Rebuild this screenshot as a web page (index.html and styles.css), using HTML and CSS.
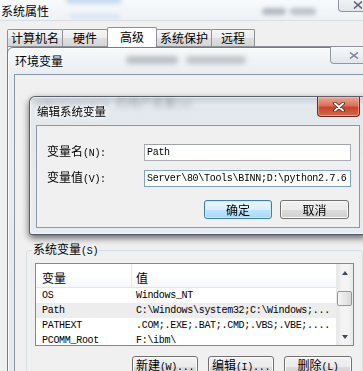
FILE: index.html
```html
<!DOCTYPE html>
<html lang="zh-CN">
<head>
<meta charset="utf-8">
<title>编辑系统变量</title>
<link rel="stylesheet" href="styles.css">
</head>
<body>
<div class="sp-titlebar">
  <span class="blur blob-blue1"></span>
  <span class="blur blob-blue2"></span>
  <span class="blur blob-gray1"></span>
  <span class="blur blob-gray2"></span>
  <span class="sp-title">系统属性</span>
  <span class="capbtn outer-close"><svg width="10" height="8" viewBox="0 0 10 8"><path d="M1 0.5 L9 7.5 M9 0.5 L1 7.5" stroke="#5c6670" stroke-width="1.6" fill="none"/></svg></span>
</div>
<div class="tabs">
  <div class="tab t1">计算机名</div>
  <div class="tab t2">硬件</div>
  <div class="tab t3 active">高级</div>
  <div class="tab t4">系统保护</div>
  <div class="tab t5">远程</div>
</div>
<div class="tab-panel"></div>

<section class="envwin">
  <span class="blur blob-gray3"></span>
  <span class="blur blob-gray4"></span>
  <div class="env-title">环境变量</div>
  <span class="capbtn env-close"><svg width="10" height="7" viewBox="0 0 10 7"><path d="M1 0.5 L9 6.5 M9 0.5 L1 6.5" stroke="#7a848e" stroke-width="1.5" fill="none"/></svg></span>
  <div class="env-client">
    <div class="usergroup"><span class="mono">Administrator </span>的用户变量<span class="mono">(U)</span></div>
    <fieldset class="sysgroup">
      <legend>系统变量<span class="mono">(S)</span></legend>
      <div class="listview">
        <div class="lv-main">
          <div class="lv-head"><div class="c1">变量</div><div class="c2">值</div></div>
          <div class="lv-row mono"><div class="c1">OS</div><div class="c2">Windows_NT</div></div>
          <div class="lv-row mono sel"><div class="c1">Path</div><div class="c2">C:\Windows\system32;C:\Windows;...</div></div>
          <div class="lv-row mono"><div class="c1">PATHEXT</div><div class="c2">.COM;.EXE;.BAT;.CMD;.VBS;.VBE;....</div></div>
          <div class="lv-row mono"><div class="c1">PCOMM_Root</div><div class="c2">F:\ibm\</div></div>
        </div>
        <div class="vscroll">
          <div class="sb-btn"><span class="arrow-up"></span></div>
          <div class="sb-track"><div class="thumb"></div></div>
          <div class="sb-btn"><span class="arrow-down"></span></div>
        </div>
      </div>
      <div class="grp-buttons">
        <button class="btn w66">新建<span class="mono">(W)...</span></button>
        <button class="btn w66">编辑<span class="mono">(I)...</span></button>
        <button class="btn w68">删除<span class="mono">(L)</span></button>
      </div>
    </fieldset>
  </div>
</section>

<section class="editdlg">
  <div class="dlg-title">编辑系统变量</div>
  <span class="dlg-close"><svg width="12" height="10" viewBox="0 0 12 10"><path d="M2 1.5 L10 8.5 M10 1.5 L2 8.5" stroke="#4a2018" stroke-width="3.6" stroke-linecap="round" fill="none"/><path d="M2 1.5 L10 8.5 M10 1.5 L2 8.5" stroke="#ffffff" stroke-width="2" stroke-linecap="round" fill="none"/></svg></span>
  <div class="dlg-client">
    <div class="form">
      <label class="lbl">变量名<span class="mono">(N):</span></label>
      <input class="field mono" value="Path" readonly>
      <label class="lbl">变量值<span class="mono">(V):</span></label>
      <input class="field focus mono" value="Server\80\Tools\BINN;D:\python2.7.6" readonly>
    </div>
    <div class="dlg-buttons">
      <button class="btn ok">确定</button>
      <button class="btn cancel">取消</button>
    </div>
  </div>
</section>
</body>
</html>
```
FILE: styles.css
```css
* { box-sizing: border-box; }
html, body { margin: 0; padding: 0; }
body {
  width: 363px;
  height: 371px;
  overflow: hidden;
  position: relative;
  background: #f0f0f0;
  color: #000;
  font-family: "Noto Sans CJK SC", "Noto Sans CJK TC", sans-serif;
  font-size: 12px;
  line-height: 14px;
}
.mono {
  font-family: "Liberation Mono", "DejaVu Sans Mono", monospace;
  font-size: 10px;
  letter-spacing: -0.3px;
}
.blur { position: absolute; filter: blur(2px); border-radius: 4px; }

/* outer window: 系统属性 */
.sp-titlebar {
  position: relative;
  height: 21px;
  padding: 4px 0 0 1px;
  background: linear-gradient(#f8fafc, #eef2f6);
  border-bottom: 1px solid #d9dee3;
  overflow: hidden;
}
.sp-title { position: relative; line-height: 13px; text-shadow: 0 0 4px #fff; }
.blob-blue1 { left: 66px; top: -4px; width: 56px; height: 8px; background: #c6dbf1; }
.blob-blue2 { left: 70px; top: 14px; width: 50px; height: 5px; background: #d6e5f4; }
.blob-gray1 { left: 262px; top: 8px; width: 24px; height: 7px; background: #b4bac1; }
.blob-gray2 { left: 290px; top: 8px; width: 26px; height: 7px; background: #bcc2c8; }

.capbtn {
  position: absolute;
  display: flex;
  align-items: center;
  justify-content: center;
  border: 1px solid #8d97a3;
  border-top: none;
  border-radius: 0 0 4px 4px;
  background: linear-gradient(#f6f8fa, #e2e7ec);
}
.outer-close { left: 338px; top: -6px; width: 40px; height: 18px; padding-top: 4px; }

.tabs {
  position: relative;
  z-index: 1;
  display: flex;
  align-items: flex-end;
  height: 25px;
  padding-left: 7px;
}
.tab {
  height: 17px;
  margin-right: -1px;
  border: 1px solid #8e9198;
  border-bottom: none;
  border-radius: 2px 2px 0 0;
  background: linear-gradient(#f6f6f6, #ececec 50%, #dfdfdf 50%, #d6d6d6);
  text-align: center;
  padding-top: 1px;
  line-height: 14px;
  white-space: nowrap;
}
.tab.active {
  height: 20px;
  margin-bottom: -1px;
  background: #fff;
  padding-top: 2px;
  position: relative;
  z-index: 2;
}
.t1 { width: 56px; }
.t2 { width: 46px; }
.t3 { width: 50px; }
.t4 { width: 56px; }
.t5 { width: 44px; }
.tab-panel {
  margin-left: 7px;
  height: 400px;
  border-left: 1px solid #8e9198;
  border-top: 1px solid #8e9198;
  background: #fff;
}

/* 环境变量 window */
.envwin {
  position: absolute;
  left: 7px;
  top: 47px;
  width: 372px;
  height: 340px;
  border: 1px solid #707c89;
  border-radius: 6px 6px 0 0;
  padding-left: 6px;
  background: linear-gradient(#f7f9fb, #e9eef2 26px, #e3e8ed);
  box-shadow: inset 1px 1px 0 rgba(255,255,255,0.8);
}
.blob-gray3 { left: 118px; top: 8px; width: 52px; height: 8px; background: rgba(120,126,136,0.45); filter: blur(2.5px); }
.blob-gray4 { left: 178px; top: 8px; width: 60px; height: 8px; background: rgba(120,126,136,0.4); filter: blur(2.5px); }
.env-title {
  position: relative;
  height: 26px;
  padding: 7px 0 0 1px;
  line-height: 12px;
  text-shadow: 0 0 5px #fff;
}
.env-close { left: 322px; top: -1px; width: 48px; height: 17px; }
.env-client {
  position: relative;
  height: 320px;
  border-top: 1px solid #8a97a5;
  border-left: 1px solid #8a97a5;
  background: #f0f0f0;
}
.usergroup { height: 168px; padding: 21px 0 0 21px; line-height: 12px; }

.sysgroup {
  margin: 0 0 0 11px;
  padding: 0 8px;
  width: 337px;
  height: 140px;
  min-width: 0;
  border: 1px solid #d5dfe5;
  border-radius: 3px;
}
.sysgroup legend { padding: 0 1px; margin-left: -3px; line-height: 12px; }

.listview {
  margin-top: 5px;
  height: 83px;
  display: flex;
  border: 1px solid #828790;
  background: #fff;
}
.lv-main { flex: 1; overflow: hidden; }
.lv-head {
  display: flex;
  height: 24px;
  border-bottom: 1px solid #e5e5e5;
  background: linear-gradient(#fff, #fff 50%, #f7f8fa);
  line-height: 14px;
}
.lv-head .c1 { width: 96px; padding: 7px 0 0 6px; border-right: 1px solid #e5e5e5; }
.lv-head .c2 { padding: 7px 0 0 4px; }
.lv-row { display: flex; height: 15px; line-height: 15px; white-space: nowrap; }
.lv-row .c1 { width: 96px; padding-left: 6px; }
.lv-row .c2 { padding-left: 4px; }
.lv-row.sel { background: #ededed; }

.vscroll {
  width: 17px;
  display: flex;
  flex-direction: column;
  border-left: 1px solid #eaeaea;
  background: linear-gradient(90deg, #e7e7e7, #f4f4f4 30%, #f4f4f4 70%, #e7e7e7);
}
.sb-btn { height: 17px; display: flex; align-items: center; justify-content: center; }
.arrow-up, .arrow-down {
  width: 0; height: 0;
  border-left: 3.5px solid transparent;
  border-right: 3.5px solid transparent;
}
.arrow-up { border-bottom: 4px solid #3f4b58; }
.arrow-down { border-top: 4px solid #3f4b58; }
.sb-track { flex: 1; }
.thumb {
  margin: 10px 1px 0 0;
  height: 15px;
  border: 1px solid #979797;
  border-radius: 2px;
  background: linear-gradient(90deg, #f5f5f5, #e8e8e8 50%, #d8d8d8);
}

.grp-buttons {
  display: flex;
  justify-content: flex-end;
  gap: 10px;
  margin-top: 10px;
  padding-right: 2px;
}
.btn {
  height: 21px;
  padding: 0;
  font: inherit;
  line-height: 14px;
  color: #000;
  border: 1px solid #707070;
  border-radius: 3px;
  background: linear-gradient(#f2f2f2, #ebebeb 50%, #dddddd 50%, #cfcfcf);
  box-shadow: inset 0 0 0 1px #fcfcfc;
  white-space: nowrap;
}
.w66 { width: 66px; }
.w68 { width: 68px; }

/* 编辑系统变量 dialog */
.editdlg {
  position: absolute;
  left: 29px;
  top: 96px;
  width: 338px;
  height: 139px;
  padding: 0 6px 6px 6px;
  border: 1px solid rgba(40,50,60,0.75);
  border-radius: 6px 6px 3px 3px;
  background: linear-gradient(rgba(185,195,208,0.8), rgba(222,229,236,0.72) 8px, rgba(230,235,240,0.8));
  -webkit-backdrop-filter: blur(2.5px);
  backdrop-filter: blur(2.5px);
  box-shadow: 0 3px 7px rgba(0,0,0,0.6), inset 0 0 0 1px rgba(255,255,255,0.6);
}
.dlg-title {
  height: 28px;
  padding: 8px 0 0 1px;
  font-size: 11.5px;
  line-height: 13px;
  text-shadow: 0 0 5px #fff, 0 0 5px #fff;
}
.dlg-close {
  position: absolute;
  left: 287px;
  top: 0;
  width: 43px;
  height: 20px;
  display: flex;
  align-items: center;
  justify-content: center;
  border: 1px solid #6a2c22;
  border-top: none;
  border-radius: 0 0 4px 4px;
  background: linear-gradient(#eba999, #d9705a 45%, #c8452b 55%, #d46a4a);
  box-shadow: inset 0 0 0 1px rgba(255,200,190,0.5);
}
.dlg-client {
  height: 103px;
  padding: 17px 8px 0 10px;
  border: 1px solid #8c98a5;
  background: #f0f0f0;
}
.form {
  display: grid;
  grid-template-columns: 97px 1fr;
  row-gap: 8px;
  align-items: center;
}
.lbl { line-height: 14px; padding-top: 1px; }
.field {
  width: 100%;
  height: 17px;
  margin: 0;
  padding: 0 2px;
  border: 1px solid #abadb3;
  border-top-color: #9ea3ab;
  background: #fff;
  color: #000;
  outline: none;
}
.field.focus { border-color: #7da2ce; }
.dlg-buttons {
  display: flex;
  justify-content: flex-end;
  gap: 8px;
  margin-top: 13px;
  padding-right: 2px;
}
.btn.ok {
  width: 68px;
  height: 19px;
  border-color: #3c7fb1;
  background: linear-gradient(#eaf6fd, #d9f0fc 50%, #bee6fd 50%, #a7d9f5);
  box-shadow: inset 0 0 0 1px #c7ecfc;
}
.btn.cancel { width: 69px; height: 19px; }
```
